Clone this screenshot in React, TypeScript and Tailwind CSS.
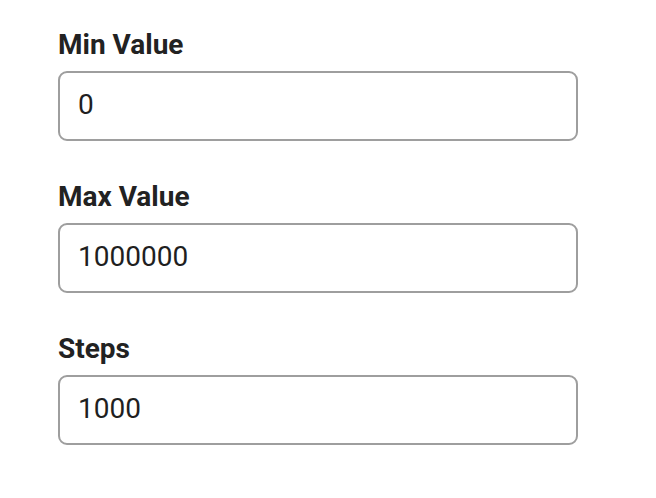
import React from "react";

const fields = [
  { label: "Min Value", value: "0" },
  { label: "Max Value", value: "1000000" },
  { label: "Steps", value: "1000" },
];

export default function App() {
  return (
    <div
      className="w-[656px] h-[498px] bg-white pl-[58px] pt-[29px] flex flex-col gap-[40px]"
      style={{ fontFamily: "Roboto, 'Liberation Sans', sans-serif" }}
    >
      {fields.map((f) => (
        <div key={f.label} className="flex flex-col">
          <label className="text-[28px] leading-[32px] font-bold text-[#222222] mb-[10px]">
            {f.label}
          </label>
          <input
            readOnly
            value={f.value}
            className="w-[520px] h-[70px] border-2 border-[#9e9e9e] rounded-[9px] px-[18px] pb-[3px] text-[28px] text-[#1f1f1f] outline-none bg-white"
            style={{ fontFamily: "Roboto, 'Liberation Sans', sans-serif" }}
          />
        </div>
      ))}
    </div>
  );
}
